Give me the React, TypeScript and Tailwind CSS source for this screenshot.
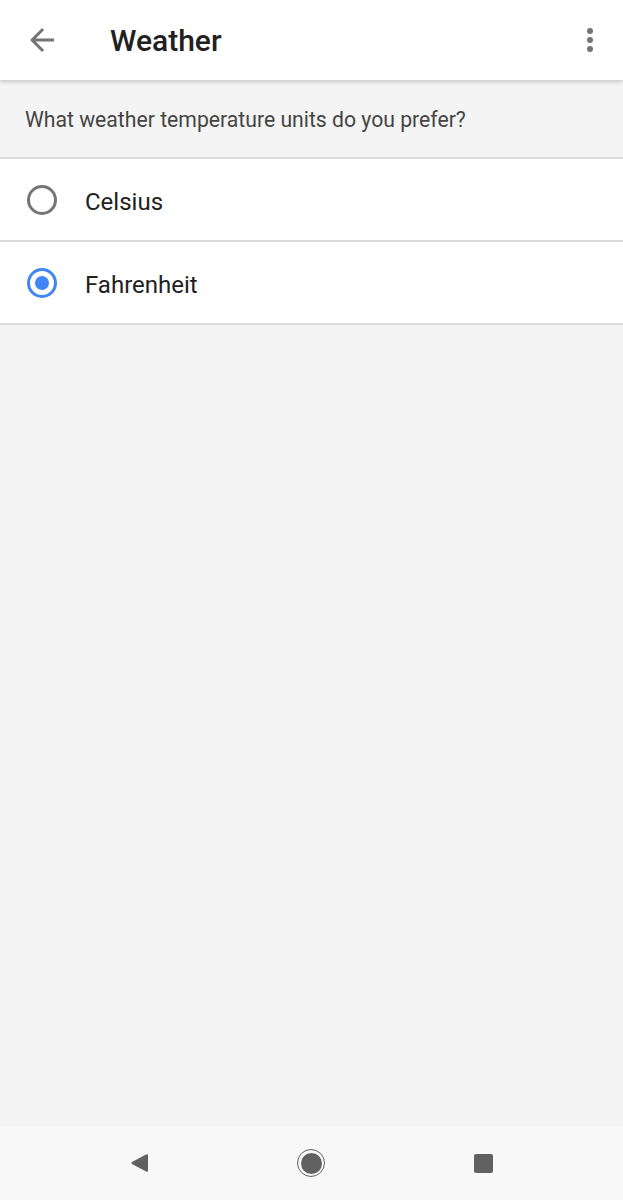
import { useState } from "react";

const options = ["Celsius", "Fahrenheit"];

function Radio({ checked }: { checked: boolean }) {
  return (
    <span
      className={
        "flex h-[30px] w-[30px] items-center justify-center rounded-full border-[3px] " +
        (checked ? "border-[#4285f4]" : "border-[#757575]")
      }
    >
      {checked && <span className="h-[14px] w-[14px] rounded-full bg-[#4285f4]" />}
    </span>
  );
}

export default function App() {
  const [unit, setUnit] = useState("Fahrenheit");

  return (
    <div
      className="flex h-[1200px] w-[623px] flex-col bg-[#f4f4f4]"
      style={{ fontFamily: "Roboto, 'Noto Sans', sans-serif" }}
    >
      <header className="relative z-10 flex h-[80px] shrink-0 items-center bg-white shadow-[0_2px_4px_rgba(0,0,0,0.18)]">
        <button className="ml-[24px] flex h-[36px] w-[36px] items-center justify-center">
          <svg width="36" height="36" viewBox="0 0 24 24" fill="#757575">
            <path d="M20 11H7.83l5.59-5.59L12 4l-8 8 8 8 1.41-1.41L7.83 13H20v-2z" />
          </svg>
        </button>
        <h1 className="ml-[50px] text-[30px] font-medium text-[#212121]">Weather</h1>
        <button className="ml-auto mr-[21px] flex h-[36px] w-[24px] flex-col items-center justify-center gap-[3px]">
          <span className="h-[6px] w-[6px] rounded-full bg-[#757575]" />
          <span className="h-[6px] w-[6px] rounded-full bg-[#757575]" />
          <span className="h-[6px] w-[6px] rounded-full bg-[#757575]" />
        </button>
      </header>

      <div className="flex h-[79px] items-center border-b-2 border-[#dcdcdc] px-[25px] pt-[3px]">
        <p className="text-[21.2px] text-[#444444]">What weather temperature units do you prefer?</p>
      </div>

      <div className="bg-white">
        {options.map((o) => (
          <button
            key={o}
            onClick={() => setUnit(o)}
            className="flex h-[83px] w-full items-center border-b-2 border-[#dcdcdc] pl-[27px] text-left"
          >
            <Radio checked={unit === o} />
            <span className="ml-[28px] pt-[4px] text-[24px] text-[#212121]">{o}</span>
          </button>
        ))}
      </div>

      <div className="flex-1" />

      <nav className="flex h-[74px] shrink-0 items-center bg-[#f8f8f8]">
        <div className="flex w-full items-center">
          <span className="ml-[130px] flex h-[20px] w-[18px] items-center">
            <svg width="18" height="20" viewBox="0 0 18 20">
              <path d="M16 1.5 L2 9 Q0.8 10 2 11 L16 18.5 Q18 19.5 18 17.5 V2.5 Q18 0.5 16 1.5 Z" fill="#616161" />
            </svg>
          </span>
          <span className="ml-[149px] flex h-[28px] w-[28px] items-center justify-center rounded-full border-[1.5px] border-[#616161]">
            <span className="h-[21px] w-[21px] rounded-full bg-[#616161]" />
          </span>
          <span className="ml-[149px] h-[19px] w-[19px] rounded-[2px] bg-[#616161]" />
        </div>
      </nav>
    </div>
  );
}
